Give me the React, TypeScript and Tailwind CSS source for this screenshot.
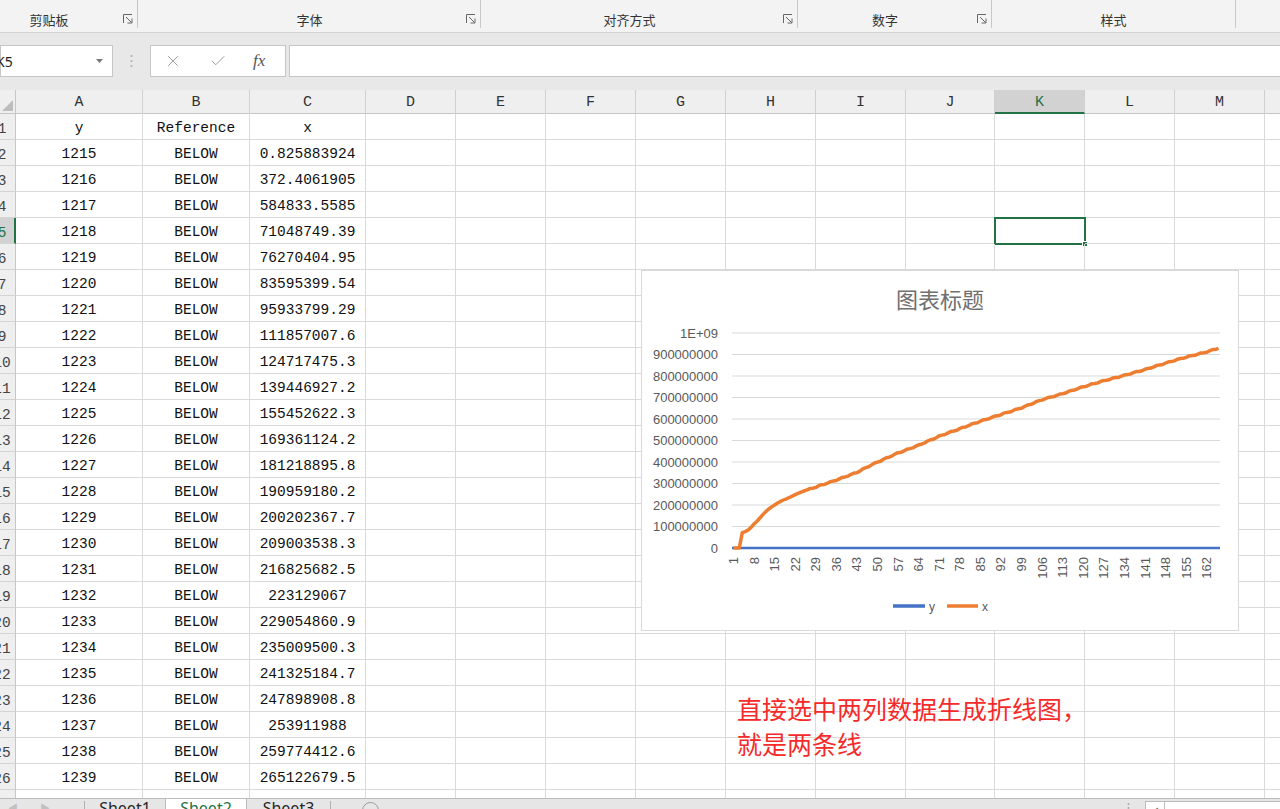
import { Check, X } from "lucide-react";

const COLS = ["A", "B", "C", "D", "E", "F", "G", "H", "I", "J", "K", "L", "M", "N"];
const COL_W = [
  "w-[127px]",
  "w-[107px]",
  "w-[116px]",
  "w-[90px]",
  "w-[90px]",
  "w-[90px]",
  "w-[90px]",
  "w-[90px]",
  "w-[90px]",
  "w-[89px]",
  "w-[90px]",
  "w-[90px]",
  "w-[90px]",
  "w-[120px]",
];

const X_TEXT = [
  "0.825883924",
  "372.4061905",
  "584833.5585",
  "71048749.39",
  "76270404.95",
  "83595399.54",
  "95933799.29",
  "111857007.6",
  "124717475.3",
  "139446927.2",
  "155452622.3",
  "169361124.2",
  "181218895.8",
  "190959180.2",
  "200202367.7",
  "209003538.3",
  "216825682.5",
  "223129067",
  "229054860.9",
  "235009500.3",
  "241325184.7",
  "247898908.8",
  "253911988",
  "259774412.6",
  "265122679.5",
];

const ROWS: string[][] = [
  ["y", "Reference", "x"],
  ...X_TEXT.map((x, i) => [String(1215 + i), "BELOW", x]),
  ["", "", ""],
];

// rest of the x series (rows below the visible ones), read off the chart
const ANCHORS: [number, number][] = [
  [25, 265.1],
  [36, 316],
  [43, 352],
  [47, 380],
  [50, 400],
  [57, 442],
  [64, 478],
  [71, 520],
  [85, 590],
  [99, 652],
  [106, 690],
  [113, 718],
  [120, 750],
  [127, 778],
  [134, 803],
  [141, 830],
  [148, 860],
  [155, 888],
  [162, 912],
  [166, 930],
];

function xSeries(): number[] {
  const out = X_TEXT.map(Number);
  for (let i = 26; i <= 166; i++) {
    let k = 0;
    while (k < ANCHORS.length - 2 && ANCHORS[k + 1][0] < i) k++;
    const [a, va] = ANCHORS[k];
    const [b, vb] = ANCHORS[k + 1];
    const v = va + ((vb - va) * (i - a)) / (b - a);
    out.push((v + Math.sin(i * 1.7) * 2.2) * 1e6);
  }
  return out;
}

const PLOT_X = 90;
const PLOT_W = 488;
const N = 166;
const CAT_W = PLOT_W / N;
const Y0 = 277;
const cx = (i: number) => PLOT_X + (i - 0.5) * CAT_W;
const vy = (v: number) => Y0 - (v / 1e9) * 215;

const Y_TICKS = [
  "0",
  "100000000",
  "200000000",
  "300000000",
  "400000000",
  "500000000",
  "600000000",
  "700000000",
  "800000000",
  "900000000",
  "1E+09",
];

function Launcher() {
  return (
    <svg width="10" height="10" viewBox="0 0 10 10" className="ml-[5px] mr-[4px] mb-[4px] shrink-0" fill="none" stroke="#666" strokeWidth="1">
      <path d="M0.5 9V0.5H9" />
      <path d="M3 3L8.5 8.5" />
      <path d="M9 4.5V9H4.5" />
    </svg>
  );
}

function RibbonGroup({
  label,
  className,
  launcher,
}: {
  label?: string;
  className: string;
  launcher?: boolean;
}) {
  return (
    <div className={`flex h-[28px] items-end border-r border-[#c8c8c8] shrink-0 ${className}`}>
      <span className="flex-1 text-center text-[13px] leading-[17px] text-[#333]">{label}</span>
      {launcher && <Launcher />}
    </div>
  );
}

function Chart() {
  const xs = xSeries();
  const path = xs.map((v, i) => `${i === 0 ? "M" : "L"}${cx(i + 1).toFixed(1)} ${vy(v).toFixed(1)}`).join(" ");
  const labels = Array.from({ length: 24 }, (_, k) => 1 + 7 * k);
  return (
    <div className="absolute left-[641px] top-[270px] w-[598px] h-[361px] border border-[#d9d9d9] bg-white">
      <svg width="596" height="359" viewBox="0 0 596 359">
        <text x="298" y="37" textAnchor="middle" fontSize="22" fill="#707070" fontFamily="'Noto Sans CJK SC', sans-serif">
          图表标题
        </text>
        {Y_TICKS.map((t, k) => {
          const y = Y0 - k * 21.5;
          return (
            <g key={t}>
              <line x1={PLOT_X} x2={PLOT_X + PLOT_W} y1={y} y2={y} stroke="#d9d9d9" strokeWidth="1" />
              <text x="76" y={y + 4.5} textAnchor="end" fontSize="13" fill="#595959" fontFamily="'Liberation Sans', sans-serif">
                {t}
              </text>
            </g>
          );
        })}
        {labels.map((n) => {
          const x = cx(n) + 4.5;
          return (
            <text
              key={n}
              x={x}
              y={286}
              transform={`rotate(-90 ${x} 286)`}
              textAnchor="end"
              fontSize="13"
              fill="#595959"
              fontFamily="'Liberation Sans', sans-serif"
            >
              {n}
            </text>
          );
        })}
        <line x1={PLOT_X} x2={PLOT_X + PLOT_W} y1={Y0} y2={Y0} stroke="#4472c4" strokeWidth="2.5" />
        <path d={path} fill="none" stroke="#ed7d31" strokeWidth="3.5" strokeLinejoin="round" />
        <line x1="251" x2="283" y1="335" y2="335" stroke="#4472c4" strokeWidth="3.5" />
        <text x="287" y="339.5" fontSize="12" fill="#595959" fontFamily="'Liberation Sans', sans-serif">
          y
        </text>
        <line x1="305" x2="336" y1="335" y2="335" stroke="#ed7d31" strokeWidth="3.5" />
        <text x="340" y="339.5" fontSize="12" fill="#595959" fontFamily="'Liberation Sans', sans-serif">
          x
        </text>
      </svg>
    </div>
  );
}

function GridRow({ idx, cells }: { idx: number; cells: string[] }) {
  const active = idx === 5;
  return (
    <div className="flex h-[26px] shrink-0">
      <div
        className={`w-[16px] shrink-0 overflow-hidden border-b border-[#d4d4d4] ${
          active ? "bg-[#d2d2d2] border-r-2 border-r-[#217346] text-[#217346]" : "bg-[#efefef] border-r border-r-[#c6c6c6] text-[#444]"
        }`}
      >
        <div className="w-[32px] -ml-[14px] text-center leading-[30px]">{idx}</div>
      </div>
      {COLS.map((c, ci) => (
        <div
          key={c}
          className={`relative shrink-0 h-full border-r border-b border-[#dadada] flex items-center justify-center pt-[5px] text-[#111] ${COL_W[ci]}`}
        >
          {cells[ci] ?? ""}
          {active && c === "K" && (
            <div className="absolute -top-[1px] -left-[1px] w-[92px] h-[28px] border-2 border-[#217346]">
              <div className="absolute -right-[4px] -bottom-[4px] w-[6px] h-[6px] bg-[#217346] border border-white" />
            </div>
          )}
        </div>
      ))}
    </div>
  );
}

export default function App() {
  return (
    <div className="relative w-[1280px] h-[809px] overflow-hidden bg-white flex flex-col font-['Noto_Sans','Noto_Sans_CJK_SC',sans-serif]">
      {/* ribbon group labels */}
      <div className="flex h-[33px] shrink-0 bg-[#f3f3f3] border-b border-[#d4d4d4] font-['Noto_Sans_CJK_SC',sans-serif]">
        <RibbonGroup label="剪贴板" className="w-[178px] -ml-[40px] pl-[20px]" launcher />
        <RibbonGroup label="字体" className="w-[343px] pl-[20px]" launcher />
        <RibbonGroup label="对齐方式" className="w-[317px]" launcher />
        <RibbonGroup label="数字" className="w-[194px]" launcher />
        <RibbonGroup label="样式" className="w-[244px]" />
        <div className="flex-1" />
      </div>

      {/* formula bar */}
      <div className="shrink-0 bg-[#e8e8e8] pt-[12px] pb-[13px]">
        <div className="flex h-[32px]">
          <div className="w-[113px] shrink-0 flex items-center border border-[#c6c6c6] bg-white">
            <span className="-ml-[5px] text-[14px] text-[#222]">K5</span>
            <svg width="7" height="4" viewBox="0 0 7 4" className="ml-auto mr-[9px]">
              <path d="M0 0H7L3.5 4Z" fill="#777" />
            </svg>
          </div>
          <div className="w-[37px] shrink-0 flex items-center justify-center pr-[1px]">
            <svg width="3" height="14" viewBox="0 0 3 14">
              <circle cx="1.5" cy="2" r="1.1" fill="#b0b0b0" />
              <circle cx="1.5" cy="7" r="1.1" fill="#b0b0b0" />
              <circle cx="1.5" cy="12" r="1.1" fill="#b0b0b0" />
            </svg>
          </div>
          <div className="w-[136px] shrink-0 flex items-center border border-[#c6c6c6] bg-white">
            <X className="ml-[13px] size-[18px] text-[#9a9a9a]" strokeWidth={1.3} />
            <Check className="ml-[27px] size-[18px] text-[#9a9a9a]" strokeWidth={1.3} />
            <span className="ml-[26px] font-['Liberation_Serif',serif] italic text-[17px] text-[#555]">fx</span>
          </div>
          <div className="flex-1 ml-[3px] border border-r-0 border-[#c6c6c6] bg-white" />
        </div>
      </div>

      {/* sheet */}
      <div className="relative h-[708px] shrink-0 overflow-hidden font-['Liberation_Mono','Noto_Sans_CJK_SC',monospace] text-[14.5px]">
        <div className="flex h-[24px] bg-[#efefef]">
          <div className="w-[16px] shrink-0 border-r border-b border-[#c6c6c6] flex items-end justify-end p-[2px]">
            <svg width="11" height="11" viewBox="0 0 11 11">
              <path d="M11 0V11H0Z" fill="#bdbdbd" />
            </svg>
          </div>
          {COLS.map((c, ci) => (
            <div
              key={c}
              className={`shrink-0 h-full border-r border-[#d0d0d0] text-center text-[15px] leading-[26px] ${COL_W[ci]} ${
                c === "K" ? "bg-[#d2d2d2] text-[#217346] border-b-2 border-b-[#217346]" : "text-[#333] border-b border-b-[#c6c6c6]"
              }`}
            >
              {c}
            </div>
          ))}
        </div>
        {ROWS.map((cells, i) => (
          <GridRow key={i} idx={i + 1} cells={cells} />
        ))}
      </div>

      {/* sheet tabs */}
      <div className="flex h-[30px] shrink-0 bg-[#e6e6e6] border-t border-[#bcbcbc] text-[16px] leading-[16px]">
        <div className="w-[84px] shrink-0 flex items-start gap-[22px] pl-[8px] pt-[1px] text-[10px] text-[#c0c0c0]">
          <span>◀</span>
          <span>▶</span>
        </div>
        <div className="w-px h-[16px] mt-[2px] bg-[#b0b0b0]" />
        <div className="w-[80px] shrink-0 text-center pt-[1px] text-[#262626]">Sheet1</div>
        <div className="w-[82px] shrink-0 text-center pt-[1px] text-[#217346] bg-white border-x border-[#bcbcbc]">Sheet2</div>
        <div className="w-[83px] shrink-0 text-center pt-[1px] text-[#262626]">Sheet3</div>
        <div className="w-px h-[16px] mt-[2px] bg-[#b0b0b0]" />
        <div className="ml-[31px] mt-[3px] w-[17px] h-[17px] rounded-full border border-[#9a9a9a]" />
        <div className="ml-auto flex items-start">
          <svg width="3" height="10" viewBox="0 0 3 10" className="mt-[3px] mr-[15px]">
            <circle cx="1.5" cy="2" r="1" fill="#aaa" />
            <circle cx="1.5" cy="6" r="1" fill="#aaa" />
          </svg>
          <div className="w-[135px] h-[20px] mt-[2px] flex bg-white border border-r-0 border-[#bcbcbc]">
            <div className="w-[19px] border-r border-[#bcbcbc] flex items-start pt-[1px] justify-center text-[8px] text-[#777]">◀</div>
          </div>
        </div>
      </div>

      <Chart />

      <div className="absolute left-[737px] top-[691px] text-[25px] leading-[35px] text-[#f52a2a] font-['Noto_Sans_CJK_SC',sans-serif]">
        <div>直接选中两列数据生成折线图，</div>
        <div>就是两条线</div>
      </div>
    </div>
  );
}
